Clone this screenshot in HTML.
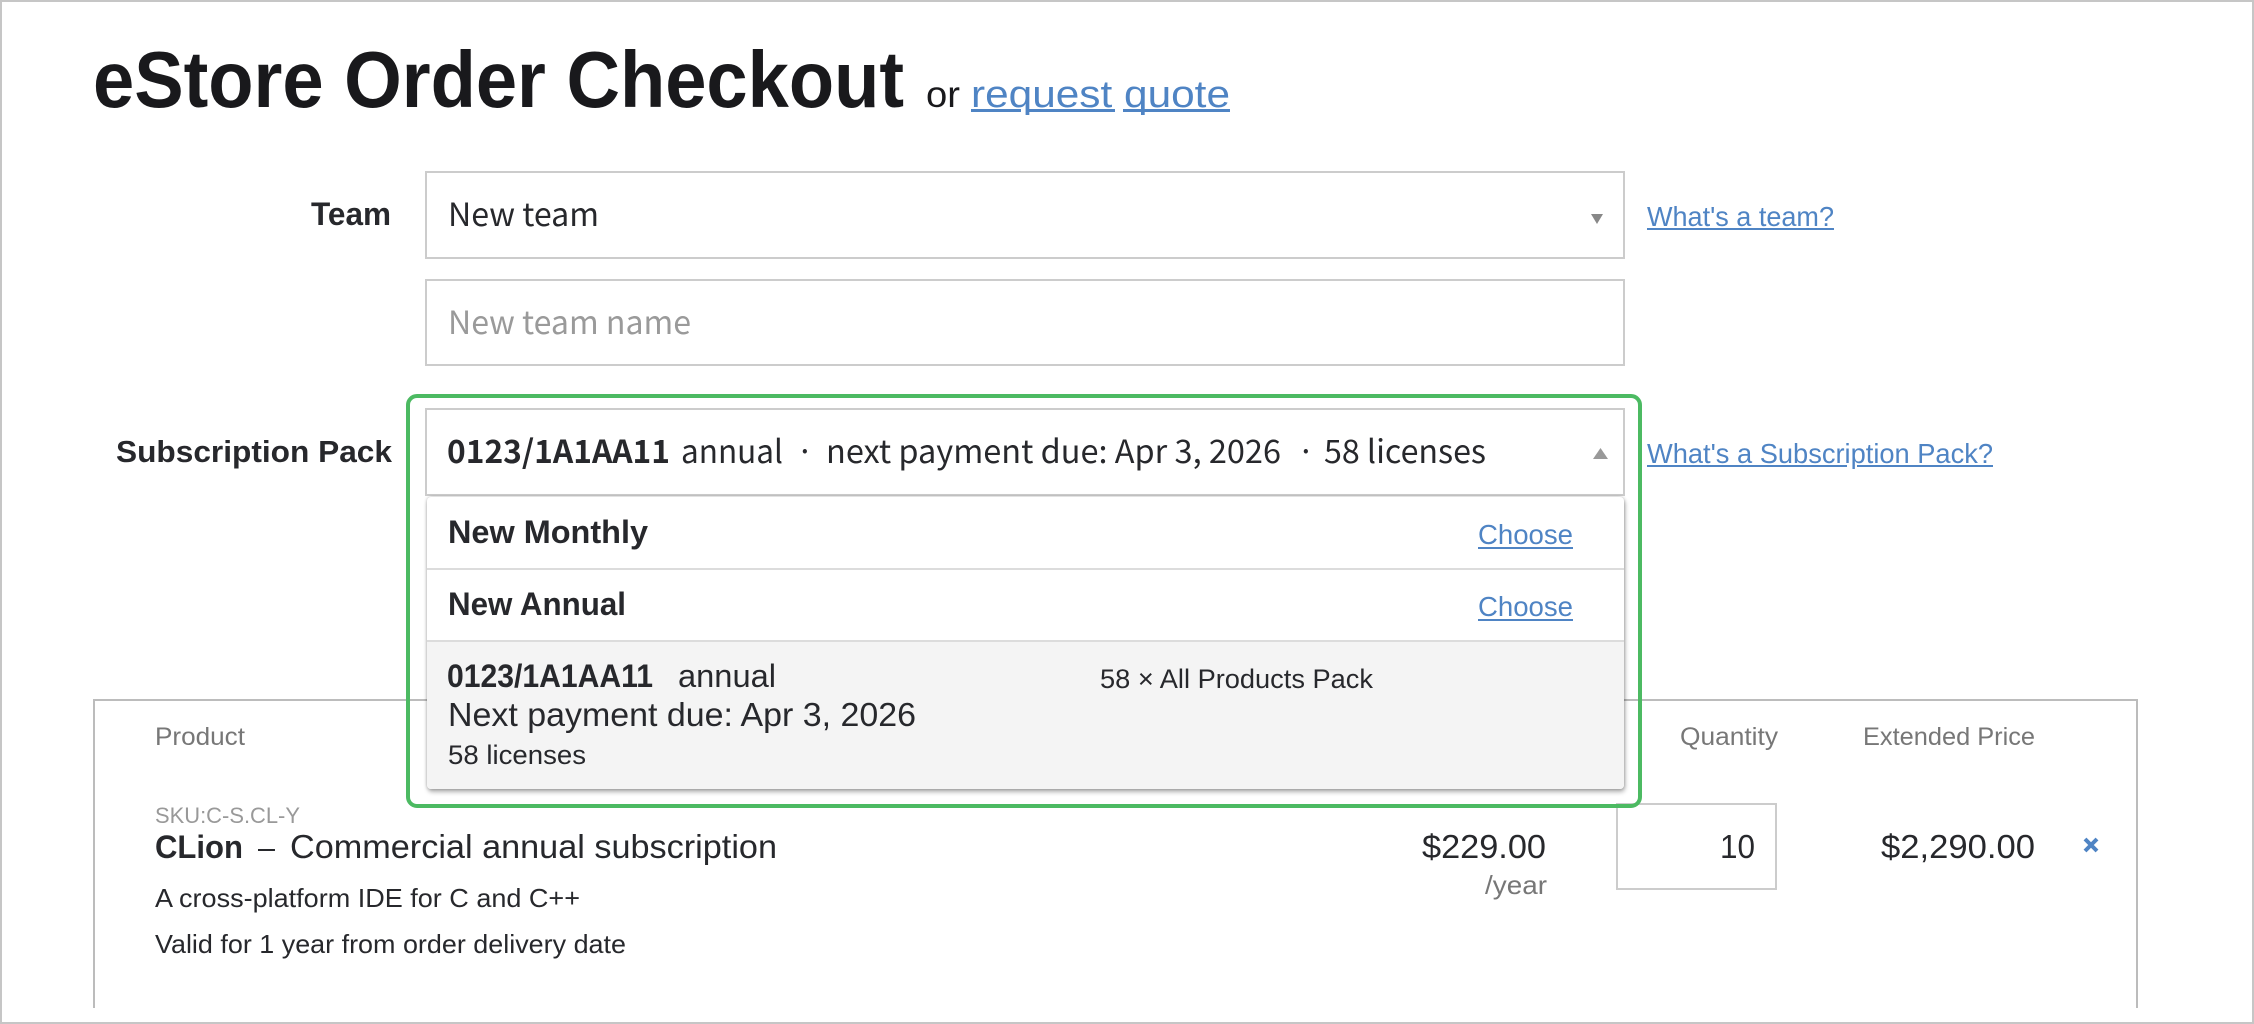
<!DOCTYPE html>
<html><head><meta charset="utf-8"><title>eStore Order Checkout</title>
<style>
html,body{margin:0;padding:0;background:#fff}
#r{position:relative;width:2254px;height:1024px;overflow:hidden;background:#fff}
#r div{position:absolute;box-sizing:border-box}
svg{position:absolute;left:0;top:0}
text{font-family:"Liberation Sans",sans-serif;fill:#27282c}
.b{font-weight:700}
.l{fill:#4f84c4}
.g{fill:#777}
.n{font-family:"Noto Sans CJK JP","Liberation Sans",sans-serif}
</style></head><body><div id="r">
<div style="left:0;top:0;width:2254px;height:1024px;border:2px solid #c6c6c6"></div>
<div style="left:93px;top:699px;width:2045px;height:309px;border:2px solid #bcbcbc;border-bottom:0"></div>
<div style="left:1616px;top:803px;width:161px;height:87px;border:2px solid #ccc"></div>
<div style="left:425px;top:171px;width:1200px;height:88px;border:2px solid #ccc"></div>
<div style="left:425px;top:279px;width:1200px;height:87px;border:2px solid #ccc"></div>
<div style="left:425px;top:408px;width:1200px;height:88px;border:2px solid #ccc;background:#fff"></div>
<div style="left:427px;top:497px;width:1197px;height:292px;background:#fff;border-radius:4px;box-shadow:1px 3px 5px rgba(0,0,0,.3),0 0 3px rgba(0,0,0,.25)"></div>
<div style="left:427px;top:568px;width:1197px;height:2px;background:#dcdcdc"></div>
<div style="left:427px;top:640px;width:1197px;height:149px;background:#f4f4f4;border-top:2px solid #dcdcdc;border-radius:0 0 4px 4px"></div>
<div style="left:406px;top:394px;height:414px;width:1236px;border:4px solid #4cba62;border-radius:11px"></div>
<svg width="2254" height="1024" viewBox="0 0 2254 1024">
<text class="b" x="93" y="107" font-size="80" textLength="811" lengthAdjust="spacingAndGlyphs" style="fill:#19191c">eStore Order Checkout</text>
<text x="926" y="107" font-size="37" textLength="34" lengthAdjust="spacingAndGlyphs" style="fill:#19191c">or</text>
<text class="l" x="971" y="107" font-size="38" textLength="259" lengthAdjust="spacingAndGlyphs">request quote</text>
<path fill="#4f84c4" d="M971 109h50v3h-50zM1028 109h87v3h-87zM1123 109h107v3h-107z"/>

<text class="b" x="311" y="225" font-size="32" textLength="80" lengthAdjust="spacingAndGlyphs">Team</text>
<text class="n" x="448" y="226" font-size="32" textLength="151" lengthAdjust="spacingAndGlyphs">New team</text>
<text class="n" x="448" y="334" font-size="32" textLength="243" lengthAdjust="spacingAndGlyphs" style="fill:#9a9a9a">New team name</text>
<polygon points="1591,214 1603,214 1597,224" fill="#888"/>
<text class="l" x="1647" y="226" font-size="28" textLength="187" lengthAdjust="spacingAndGlyphs">What's a team?</text>
<rect x="1647" y="228" width="187" height="2" fill="#4f84c4"/>

<text class="b" x="116" y="462" font-size="31" textLength="276" lengthAdjust="spacingAndGlyphs">Subscription Pack</text>
<text class="b n" x="447" y="463" font-size="32" textLength="223" lengthAdjust="spacingAndGlyphs">0123/1A1AA11</text>
<text class="n" x="681" y="463" font-size="32" textLength="102" lengthAdjust="spacingAndGlyphs">annual</text>
<text class="n" x="796" y="463" font-size="32">·</text>
<text class="n" x="826" y="463" font-size="32" textLength="455" lengthAdjust="spacingAndGlyphs">next payment due: Apr 3, 2026</text>
<text class="n" x="1297" y="463" font-size="32">·</text>
<text class="n" x="1324" y="463" font-size="32" textLength="162" lengthAdjust="spacingAndGlyphs">58 licenses</text>
<polygon points="1593,459 1608,459 1600.5,448" fill="#999"/>
<text class="l" x="1647" y="463" font-size="28" textLength="346" lengthAdjust="spacingAndGlyphs">What's a Subscription Pack?</text>
<path fill="#4f84c4" d="M1647 465h200v2h-200zM1857 465h136v2h-136z"/>

<text class="b" x="448" y="543" font-size="32" textLength="200" lengthAdjust="spacingAndGlyphs">New Monthly</text>
<text class="l" x="1478" y="544" font-size="28" textLength="95" lengthAdjust="spacingAndGlyphs">Choose</text>
<rect x="1478" y="547" width="95" height="2" fill="#4f84c4"/>
<text class="b" x="448" y="615" font-size="32" textLength="178" lengthAdjust="spacingAndGlyphs">New Annual</text>
<text class="l" x="1478" y="616" font-size="28" textLength="95" lengthAdjust="spacingAndGlyphs">Choose</text>
<rect x="1478" y="619" width="95" height="2" fill="#4f84c4"/>

<text class="b" x="447" y="687" font-size="32" textLength="206" lengthAdjust="spacingAndGlyphs">0123/1A1AA11</text>
<text x="678" y="687" font-size="32" textLength="98" lengthAdjust="spacingAndGlyphs">annual</text>
<text x="1100" y="688" font-size="27" textLength="273" lengthAdjust="spacingAndGlyphs">58 × All Products Pack</text>
<text x="448" y="726" font-size="33" textLength="468" lengthAdjust="spacingAndGlyphs">Next payment due: Apr 3, 2026</text>
<text x="448" y="764" font-size="27" textLength="138" lengthAdjust="spacingAndGlyphs">58 licenses</text>

<text class="g" x="155" y="745" font-size="25" textLength="90" lengthAdjust="spacingAndGlyphs">Product</text>
<text class="g" x="1680" y="745" font-size="25" textLength="98" lengthAdjust="spacingAndGlyphs">Quantity</text>
<text class="g" x="1863" y="745" font-size="25" textLength="172" lengthAdjust="spacingAndGlyphs">Extended Price</text>

<text x="155" y="823" font-size="22" textLength="145" lengthAdjust="spacingAndGlyphs" style="fill:#999">SKU:C-S.CL-Y</text>
<text class="b" x="155" y="858" font-size="32" textLength="88" lengthAdjust="spacingAndGlyphs">CLion</text>
<text x="258" y="858" font-size="31" textLength="17" lengthAdjust="spacingAndGlyphs">–</text>
<text x="290" y="858" font-size="33" textLength="487" lengthAdjust="spacingAndGlyphs">Commercial annual subscription</text>
<text x="155" y="907" font-size="26" textLength="425" lengthAdjust="spacingAndGlyphs">A cross-platform IDE for C and C++</text>
<text x="155" y="953" font-size="26" textLength="471" lengthAdjust="spacingAndGlyphs">Valid for 1 year from order delivery date</text>

<text x="1422" y="858" font-size="33" textLength="124" lengthAdjust="spacingAndGlyphs">$229.00</text>
<text class="g" x="1485" y="894" font-size="26" textLength="62" lengthAdjust="spacingAndGlyphs">/year</text>
<text x="1720" y="858" font-size="33" textLength="35" lengthAdjust="spacingAndGlyphs">10</text>
<text x="1881" y="858" font-size="33" textLength="154" lengthAdjust="spacingAndGlyphs">$2,290.00</text>
<path d="M2085 839L2097 851M2097 839L2085 851" stroke="#4f84c4" stroke-width="4" fill="none"/>
</svg>
</div></body></html>
